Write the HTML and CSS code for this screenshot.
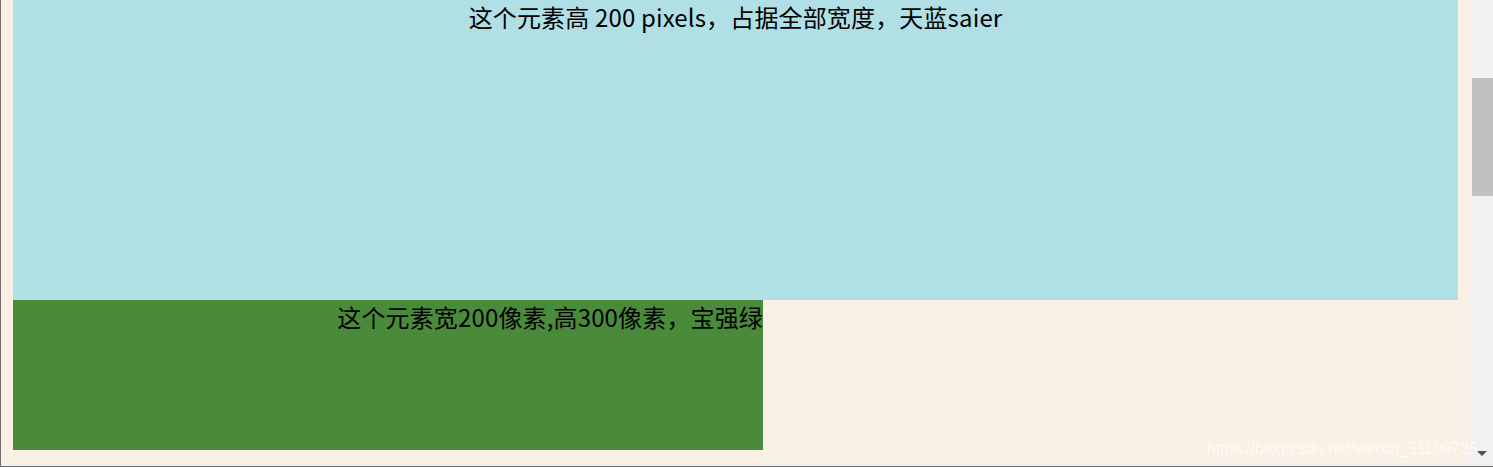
FILE: index.html
```html
<!DOCTYPE html>
<html lang="zh-CN">
<head>
<meta charset="utf-8">
<title>saier</title>
<link rel="stylesheet" href="styles.css">
</head>
<body>
<div class="frame">
  <div class="page">
    <div class="sky">这个元素高 200 pixels，占据全部宽度，天蓝saier</div>
    <div class="green">这个元素宽200像素,高300像素，宝强绿</div>
  </div>
  <div class="scrollbar">
    <div class="thumb"></div>
    <div class="arrow"></div>
  </div>
  <div class="watermark">https://blog.csdn.net/weixin_51109735</div>
</div>
</body>
</html>
```
FILE: styles.css
```css
html, body {
  margin: 0;
  padding: 0;
  width: 1493px;
  height: 467px;
  overflow: hidden;
}
.frame {
  position: relative;
  display: flex;
  width: 1493px;
  height: 467px;
  box-sizing: border-box;
  border-left: 1px solid #6e6e6e;
  border-bottom: 1px solid #6e6e6e;
}
.page {
  flex: 1;
  background: #faf0e6;
  padding: 0 12px;
  font-family: "Noto Sans CJK SC", "Noto Sans", sans-serif;
  font-size: 24px;
  line-height: 34px;
  letter-spacing: 0.15px;
  color: #000;
}
.sky {
  height: 300px;
  background: #b0dfe5;
  text-align: center;
}
.green {
  width: 750px;
  height: 150px;
  background: #4a8a3b;
  text-align: right;
}
.watermark {
  position: absolute;
  right: 15px;
  bottom: 7px;
  font-family: "Liberation Sans", Arial, sans-serif;
  font-size: 16px;
  line-height: 20px;
  color: rgba(255, 255, 255, 0.7);
  white-space: nowrap;
}
.scrollbar {
  position: relative;
  width: 23px;
  background: #f1f1f1;
}
.thumb {
  position: absolute;
  left: 2px;
  right: 0;
  top: 78px;
  height: 118px;
  background: #c1c1c1;
}
.arrow {
  position: absolute;
  left: 7px;
  bottom: 10px;
  width: 0;
  height: 0;
  border-left: 5px solid transparent;
  border-right: 5px solid transparent;
  border-top: 5px solid #505050;
}
```
